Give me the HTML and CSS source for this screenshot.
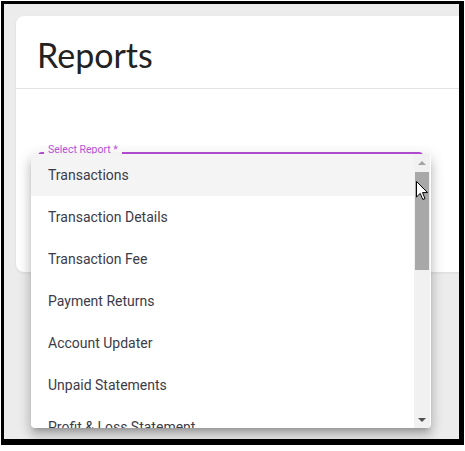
FILE: index.html
```html
<!DOCTYPE html>
<html lang="en">
  <head>
    <meta charset="UTF-8" />
    <meta name="viewport" content="width=device-width, initial-scale=1.0" />
    <title>Reports</title>
    <link rel="stylesheet" href="styles.css">
  </head>
  <body>
    <div class="frame">
      <div class="card">
        <div class="card-header">
          <h1>Reports</h1>
        </div>
        <div class="card-body">
          <fieldset class="select-field">
            <legend>Select Report *</legend>
          </fieldset>
        </div>
      </div>

      <!-- Open dropdown of the report select -->
      <div class="menu">
        <ul class="menu-list">
          <li class="selected">Transactions</li>
          <li>Transaction Details</li>
          <li>Transaction Fee</li>
          <li>Payment Returns</li>
          <li>Account Updater</li>
          <li>Unpaid Statements</li>
          <li>Profit &amp; Loss Statement</li>
        </ul>
        <div class="scrollbar">
          <div class="scroll-btn"><span class="arrow-up"></span></div>
          <div class="scroll-track"><div class="scroll-thumb"></div></div>
          <div class="scroll-btn"><span class="arrow-down"></span></div>
        </div>
      </div>

      <svg class="cursor" width="13" height="20" viewBox="0 0 13 20">
        <path d="M0.5 0.5 L0.5 16 L4.2 12.4 L6.8 18.5 L9 17.6 L6.5 11.6 L11.5 11.6 Z"
              fill="#fff" stroke="#000" stroke-width="1" stroke-linejoin="round" />
      </svg>
    </div>
  </body>
</html>
```

FILE: styles.css
```css
/* Page */
body {
  margin: 0;
  background-color: #ffffff;
  font-family: Roboto, "Liberation Sans", sans-serif;
}

/* Screenshot frame */
.frame {
  position: relative;
  box-sizing: border-box;
  width: 463px;
  height: 444px;
  margin: 1px 0 0 1px;
  padding: 12px 0 0 12px;
  border-style: solid;
  border-color: #000000;
  border-width: 3px 5px 6px 3px;
  background-color: #ececec;
  overflow: hidden;
}

/* Card */
.card {
  width: 480px;
  height: 256px;
  background-color: #ffffff;
  border-radius: 8px;
  box-shadow: 0 1px 3px rgba(0, 0, 0, 0.08);
}

.card-header {
  height: 73px;
  box-sizing: border-box;
  padding: 22px 0 0 21px;
  border-bottom: 1px solid #e2e2e2;
}

.card-header h1 {
  margin: 0;
  font-family: Lato, "Open Sans", sans-serif;
  font-size: 34px;
  line-height: 34px;
  font-weight: 400;
  color: #222222;
}

.card-body {
  padding: 55px 0 0 22px;
}

/* Outlined select with notched label */
.select-field {
  width: 385px;
  height: 52px;
  box-sizing: border-box;
  margin: 0;
  padding: 0;
  border: 2px solid #b84fd9;
  border-radius: 4px;
}

.select-field legend {
  margin-left: 4px;
  padding: 0 4px 6px;
  font-size: 10.5px;
  line-height: 12px;
  color: #bb55dd;
}

/* Dropdown menu */
.menu {
  position: absolute;
  left: 27px;
  top: 150px;
  width: 400px;
  height: 274px;
  display: flex;
  background-color: #ffffff;
  border-radius: 4px;
  overflow: hidden;
  box-shadow: 0 5px 5px -3px rgba(0, 0, 0, 0.2),
    0 8px 10px 1px rgba(0, 0, 0, 0.14), 0 3px 14px 2px rgba(0, 0, 0, 0.12);
}

.menu-list {
  flex: 1;
  margin: 0;
  padding: 0;
  list-style: none;
}

.menu-list li {
  height: 42px;
  padding-left: 17px;
  font-size: 14px;
  line-height: 42px;
  color: #3b3b48;
}

.menu-list li.selected {
  background-color: #f4f4f4;
}

/* Scrollbar */
.scrollbar {
  width: 16px;
  margin-right: 1px;
  display: flex;
  flex-direction: column;
  background-color: #f1f1f1;
}

.scroll-btn {
  height: 17px;
  display: flex;
  justify-content: center;
  align-items: center;
}

.arrow-up,
.arrow-down {
  width: 0;
  height: 0;
  border-left: 4px solid transparent;
  border-right: 4px solid transparent;
}

.arrow-up {
  border-bottom: 4px solid #a3a3a3;
}

.arrow-down {
  border-top: 4px solid #505050;
}

.scroll-track {
  flex: 1;
  padding: 1px;
}

.scroll-thumb {
  height: 98px;
  background-color: #a8a8a8;
}

/* Mouse pointer */
.cursor {
  position: absolute;
  left: 412px;
  top: 177px;
}
```
